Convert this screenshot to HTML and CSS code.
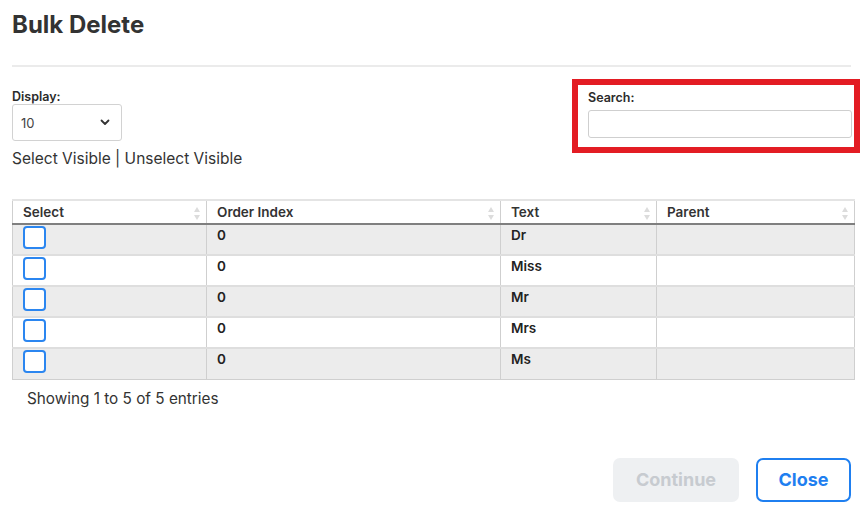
FILE: index.html
```html
<!DOCTYPE html>
<html lang="en">
<head>
<meta charset="utf-8">
<title>Bulk Delete</title>
<link rel="stylesheet" href="styles.css">
</head>
<body>
<div class="modal">
  <h1 class="title">Bulk Delete</h1>
  <hr class="divider">
  <div class="controls">
    <div class="display">
      <label class="label">Display:</label>
      <div class="select">
        <span>10</span>
        <svg width="10" height="7" viewBox="0 0 10 7"><path d="M1.5 1.5 L5 5 L8.5 1.5" fill="none" stroke="#333" stroke-width="1.8" stroke-linecap="round" stroke-linejoin="round"/></svg>
      </div>
      <div class="visible-links">Select Visible | Unselect Visible</div>
    </div>
    <div class="search-box">
      <label class="label">Search:</label>
      <div class="input"></div>
    </div>
  </div>

  <table class="grid">
    <thead>
      <tr>
        <th class="c1">Select<i class="sort"></i></th>
        <th class="c2">Order Index<i class="sort"></i></th>
        <th class="c3">Text<i class="sort"></i></th>
        <th class="c4">Parent<i class="sort"></i></th>
      </tr>
    </thead>
    <tbody>
      <tr class="odd"><td><span class="check"></span></td><td>0</td><td>Dr</td><td></td></tr>
      <tr><td><span class="check"></span></td><td>0</td><td>Miss</td><td></td></tr>
      <tr class="odd"><td><span class="check"></span></td><td>0</td><td>Mr</td><td></td></tr>
      <tr><td><span class="check"></span></td><td>0</td><td>Mrs</td><td></td></tr>
      <tr class="odd"><td><span class="check"></span></td><td>0</td><td>Ms</td><td></td></tr>
    </tbody>
  </table>
  <div class="info">Showing 1 to 5 of 5 entries</div>

  <div class="footer">
    <button class="btn btn-disabled">Continue</button>
    <button class="btn btn-outline">Close</button>
  </div>
</div>
</body>
</html>
```
FILE: styles.css
```css
* { box-sizing: border-box; }
html, body { margin: 0; padding: 0; background: #fff; }
body {
  font-family: "Inter", "Lato", sans-serif;
  color: #2b2b2b;
  width: 861px;
  height: 513px;
  overflow: hidden;
}
.modal { padding: 0 0 0 12px; }
.title {
  margin: 0;
  padding-top: 10px;
  font-size: 24px;
  font-weight: 700;
  line-height: 30px;
  color: #333;
}
.divider {
  margin: 25px 10px 0 0;
  border: 0;
  height: 2px;
  background: #ebebeb;
}
.controls {
  display: flex;
  justify-content: space-between;
  margin-top: 12px;
  padding-right: 1px;
}
.label {
  display: block;
  font-size: 12.5px;
  font-weight: 600;
  color: #2b2b2b;
  line-height: 16px;
}
.display { padding-top: 10px; }
.select {
  margin-top: -1px;
  width: 110px;
  height: 37px;
  border: 1px solid #d2d2d2;
  border-radius: 3px;
  display: flex;
  align-items: center;
  justify-content: space-between;
  padding: 0 11px 0 8px;
  font-size: 13px;
  color: #444;
}
.visible-links {
  margin-top: 8px;
  font-size: 15.5px;
  color: #333;
}
.search-box {
  width: 288px;
  height: 74px;
  border: 6px solid #e31c23;
  padding: 5px 2px 0 10px;
}
.input {
  margin-top: 4px;
  height: 28px;
  border: 1px solid #cfcfcf;
  border-radius: 3px;
}
.grid {
  margin-top: 31px;
  width: 843px;
  border-collapse: collapse;
  border: 1px solid #cfcfcf;
  border-top: 2px solid #e4e4e4;
  font-size: 13.5px;
}
.grid th {
  position: relative;
  text-align: left;
  font-weight: 600;
  height: 24px;
  padding: 0 10px;
  border-left: 1px solid #cfcfcf;
  border-bottom: 2px solid #7f7f7f;
  color: #333;
}
.c1 { width: 194px; }
.c2 { width: 294px; }
.c3 { width: 156px; }
.sort {
  position: absolute;
  right: 5px;
  top: 6px;
  width: 7px;
  height: 13px;
}
.sort::before, .sort::after {
  content: "";
  position: absolute;
  left: 0;
  border-left: 3.5px solid transparent;
  border-right: 3.5px solid transparent;
}
.sort::before { top: 0; border-bottom: 5px solid #dcdcdc; }
.sort::after { bottom: 0; border-top: 5px solid #dcdcdc; }
.grid td {
  height: 31px;
  vertical-align: top;
  padding: 2px 10px 0;
  font-weight: 600;
  border-left: 1px solid #cfcfcf;
  border-top: 2px solid #dedede;
  color: #222;
}
.grid tbody tr:first-child td { border-top: 0; }
.grid tr.odd td { background: #ececec; }
.grid td:first-child { padding: 1px 10px 0; }
.check {
  display: block;
  width: 23px;
  height: 23px;
  border: 2px solid #2b86f0;
  border-radius: 4px;
  background: #fff;
}
.info {
  margin-top: 9px;
  padding-left: 15px;
  font-size: 15.3px;
  color: #333;
}
.footer {
  display: flex;
  justify-content: flex-end;
  gap: 17px;
  margin-top: 50px;
  padding-right: 10px;
}
.btn {
  height: 44px;
  border-radius: 7px;
  font-family: inherit;
  font-size: 18px;
  font-weight: 700;
  padding: 0;
}
.btn-disabled {
  width: 126px;
  border: 0;
  background: #eef0f2;
  color: #c7cbd0;
}
.btn-outline {
  width: 95px;
  border: 2px solid #1f7ff0;
  background: #fff;
  color: #1f7ff0;
}
```
